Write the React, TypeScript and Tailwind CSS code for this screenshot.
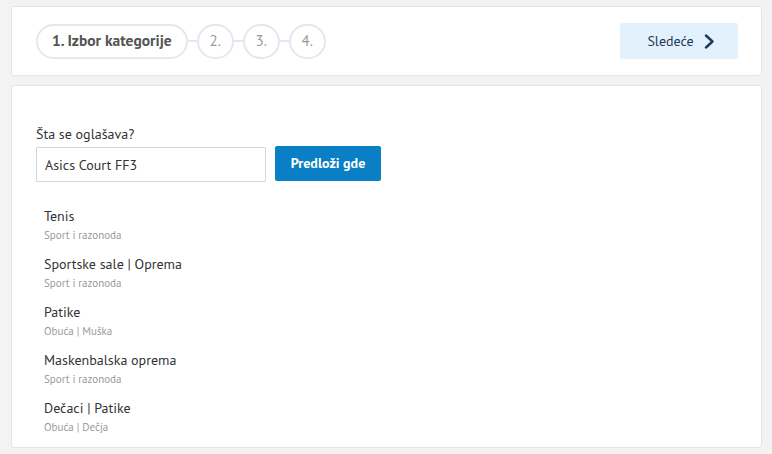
const results = [
  { title: "Tenis", path: "Sport i razonoda" },
  { title: "Sportske sale | Oprema", path: "Sport i razonoda" },
  { title: "Patike", path: "Obuća | Muška" },
  { title: "Maskenbalska oprema", path: "Sport i razonoda" },
  { title: "Dečaci | Patike", path: "Obuća | Dečja" },
];

function Step({ label }: { label: string }) {
  return (
    <div className="flex h-[35px] w-[37px] items-center justify-center rounded-full border-2 border-[#e3e8f0] text-[15px] text-[#9a9a9a]">
      {label}
    </div>
  );
}

function Connector() {
  return <div className="h-[2px] w-[9px] bg-[#e3e8f0]" />;
}

export default function App() {
  return (
    <div
      className="min-h-[454px] w-[772px] bg-[#f3f3f3] pt-[6px] pl-[11px] pr-[10px]"
      style={{ fontFamily: '"PT Sans", "Open Sans", "Liberation Sans", sans-serif' }}
    >
      <div className="flex h-[70px] items-center justify-between rounded-[3px] border border-[#e2e6ec] bg-white pl-[24px] pr-[23px]">
        <div className="flex items-center">
          <div className="flex h-[35px] items-center rounded-full border-2 border-[#e3e8f0] px-[14px] text-[15.5px] font-bold text-[#555]">
            1. Izbor kategorije
          </div>
          <Connector />
          <Step label="2." />
          <Connector />
          <Step label="3." />
          <Connector />
          <Step label="4." />
        </div>
        <button
          type="button"
          className="flex h-[36px] w-[118px] items-center justify-center gap-[10px] rounded-[2px] bg-[#e2f1fb] pl-[4px] text-[14px] text-[#1d3a5c]"
        >
          Sledeće
          <svg width="11" height="15" viewBox="0 0 11 15" fill="none">
            <path d="M2 1.5 L8.5 7.5 L2 13.5" stroke="#1d3a5c" strokeWidth="2.4" strokeLinecap="round" strokeLinejoin="round" />
          </svg>
        </button>
      </div>

      <div className="mt-[9px] h-[363px] rounded-[3px] border border-[#e2e6ec] bg-white pl-[24px] pt-[38px]">
        <div className="text-[14px] text-[#333]">Šta se oglašava?</div>
        <div className="mt-[2px] flex items-start gap-[9px]">
          <input
            readOnly
            value="Asics Court FF3"
            className="h-[35px] w-[230px] rounded-[1px] border border-[#cfd6de] px-[8px] text-[14px] text-[#333] outline-none"
          />
          <button
            type="button"
            className="-mt-[1px] h-[35px] w-[106px] rounded-[2px] bg-[#0a7fc5] text-[14px] font-bold text-white"
          >
            Predloži gde
          </button>
        </div>
        <div className="mt-[24px] flex flex-col gap-[10px] pl-[8px]">
          {results.map((r) => (
            <div key={r.title} className="flex flex-col">
              <span className="text-[14px] leading-[20px] text-[#333]">{r.title}</span>
              <span className="text-[11px] leading-[18px] text-[#9b9b9b]">{r.path}</span>
            </div>
          ))}
        </div>
      </div>
    </div>
  );
}
